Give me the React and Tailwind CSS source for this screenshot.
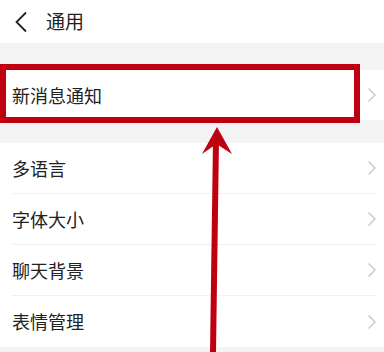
import React from 'react';

const Chevron = () => (
  <svg width="10" height="16" viewBox="0 0 10 16" fill="none" className="shrink-0">
    <path d="M1.5 1.5L8 8l-6.5 6.5" stroke="#c8c8c8" strokeWidth="1.4" />
  </svg>
);

const Row = ({ label, last }) => (
  <div className="flex h-[51px] items-center pl-3 pr-[7px]">
    <div className={`flex h-full flex-1 items-center ${last ? '' : 'border-b border-[#f0f0f0]'}`}>
      <span className="flex-1 text-[18px] text-[#222]">{label}</span>
      <Chevron />
    </div>
  </div>
);

export default function App() {
  const items = ['多语言', '字体大小', '聊天背景', '表情管理'];

  return (
    <div
      className="relative h-[352px] w-[384px] overflow-hidden bg-[#f3f3f3]"
      style={{ fontFamily: '"Noto Sans CJK SC", "Noto Sans", sans-serif' }}
    >
      {/* header */}
      <div className="flex h-[43px] items-center bg-white pl-[14px]">
        <svg width="14" height="22" viewBox="0 0 14 22" fill="none">
          <path d="M12 1.5L2.5 11l9.5 9.5" stroke="#222" strokeWidth="1.8" />
        </svg>
        <span className="ml-[18px] text-[19px] text-[#222]">通用</span>
      </div>

      <div className="mt-[27px] bg-white">
        <div className="flex h-[50px] items-center pl-3 pr-[7px]">
          <span className="flex-1 text-[18px] text-[#222]">新消息通知</span>
          <Chevron />
        </div>
      </div>

      <div className="mt-[23px] bg-white">
        {items.map((t, i) => (
          <Row key={t} label={t} last={i === items.length - 1} />
        ))}
      </div>

      {/* highlight box */}
      <div className="absolute left-0 top-[64px] h-[59px] w-[360px] border-[6px] border-[#bf0010]" />

      {/* arrow */}
      <svg className="absolute left-0 top-0" width="384" height="352" viewBox="0 0 384 352">
        <path d="M213 352L216 140" stroke="#bf0010" strokeWidth="6" />
        <path d="M217 127L232 154L216.5 144L202 154Z" fill="#bf0010" />
      </svg>
    </div>
  );
}
